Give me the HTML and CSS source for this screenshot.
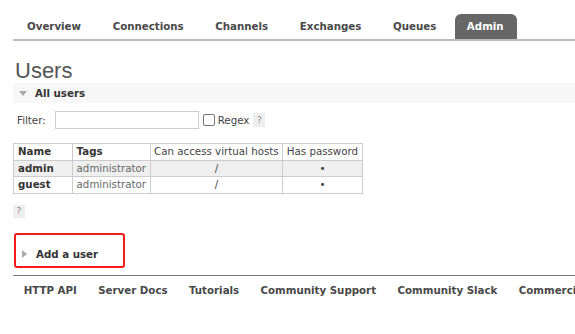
FILE: index.html
```html
<!DOCTYPE html>
<html lang="en">
<head>
    <meta charset="UTF-8">
    <meta name="viewport" content="width=device-width, initial-scale=1.0">
    <title>RabbitMQ Management - Users</title>
    <link rel="stylesheet" href="styles.css">
</head>
<body>

    <!-- Main Tabs -->
    <ul class="tabs">
        <li>Overview</li>
        <li>Connections</li>
        <li>Channels</li>
        <li>Exchanges</li>
        <li>Queues</li>
        <li class="selected">Admin</li>
    </ul>

    <h1>Users</h1>

    <!-- All users section -->
    <div class="section">
        <h2 class="section-head"><span class="arrow-down"></span>All users</h2>

        <div class="filter">
            <label>Filter:</label>
            <input type="text" class="filter-input">
            <input type="checkbox" class="check">
            <span>Regex</span>
            <span class="help">?</span>
        </div>

        <table class="list">
            <thead>
                <tr>
                    <th class="col-name bold">Name</th>
                    <th class="bold">Tags</th>
                    <th>Can access virtual hosts</th>
                    <th>Has password</th>
                </tr>
            </thead>
            <tbody>
                <tr class="alt">
                    <td class="bold">admin</td>
                    <td class="tags">administrator</td>
                    <td class="c">/</td>
                    <td class="c">&bull;</td>
                </tr>
                <tr>
                    <td class="bold">guest</td>
                    <td class="tags">administrator</td>
                    <td class="c">/</td>
                    <td class="c">&bull;</td>
                </tr>
            </tbody>
        </table>

        <span class="help help-table">?</span>
    </div>

    <!-- Add a user (collapsed) -->
    <div class="add-user">
        <h2 class="section-head plain"><span class="arrow-right"></span>Add a user</h2>
    </div>

    <!-- Footer -->
    <ul class="footer">
        <li>HTTP API</li>
        <li>Server Docs</li>
        <li>Tutorials</li>
        <li>Community Support</li>
        <li>Community Slack</li>
        <li>Commercial</li>
    </ul>

</body>
</html>
```

FILE: styles.css
```css
/* General Reset */
* {
    margin: 0;
    padding: 0;
    box-sizing: border-box;
}

body {
    font-family: "DejaVu Sans", Verdana, sans-serif;
    font-size: 10.25px;
    color: #444;
    background: #fff;
    padding-left: 13px;
    overflow: hidden;
    white-space: nowrap;
}

/* Tabs */
.tabs {
    list-style: none;
    display: flex;
    padding-top: 14px;
    border-bottom: 2px solid #bbb;
}

.tabs li {
    height: 25px;
    line-height: 25px;
    padding: 0 13px;
    margin-left: 1px;
    margin-right: 4.6px;
    font-weight: bold;
    color: #484848;
}

.tabs li.selected {
    background: #666;
    color: #fff;
    border-radius: 6px 6px 0 0;
    padding: 0 13px 0 12px;
}

/* Heading */
h1 {
    font-family: "Liberation Sans", Arial, sans-serif;
    font-weight: normal;
    font-size: 22px;
    line-height: 24px;
    color: #555;
    margin-top: 18px;
    margin-left: 2px;
}

.section-head {
    font-size: 10.25px;
    font-weight: bold;
    color: #333;
    height: 20px;
    line-height: 20px;
    background: #f7f7f7;
    display: flex;
    align-items: center;
}

.section-head.plain {
    background: none;
}

.arrow-down {
    width: 0;
    height: 0;
    border-left: 4px solid transparent;
    border-right: 4px solid transparent;
    border-top: 5px solid #aaa;
    margin: 1px 8px 0 6px;
}

.arrow-right {
    width: 0;
    height: 0;
    border-top: 4px solid transparent;
    border-bottom: 4px solid transparent;
    border-left: 5px solid #aaa;
    margin: 0 9px 0 6px;
}

/* Filter */
.filter {
    display: flex;
    align-items: center;
    height: 18px;
    margin-top: 8px;
}

.filter label {
    margin-left: 4px;
    margin-right: 9px;
}

.filter-input {
    width: 144px;
    height: 18px;
    border: 1px solid #ccc;
    outline: none;
    margin-right: 4px;
}

.check {
    appearance: none;
    width: 12px;
    height: 12px;
    border: 1px solid #777;
    border-radius: 2px;
    margin-right: 3px;
}

.help {
    display: inline-block;
    width: 12px;
    height: 14px;
    line-height: 14px;
    text-align: center;
    background: #eee;
    color: #888;
    font-size: 9px;
    margin-left: 4px;
}

/* Users table */
.list {
    border-collapse: collapse;
    margin-top: 14px;
}

.list th, .list td {
    border: 1px solid #ccc;
    padding: 0 3.6px;
    line-height: 15.7px;
    text-align: left;
    font-weight: normal;
    color: #444;
}

.list th.col-name {
    width: 59px;
    padding-left: 4px;
}

.list td.bold {
    padding-left: 4px;
}

.list .bold {
    font-weight: bold;
    color: #333;
}

.list .tags {
    color: #666;
}

.list .c {
    text-align: center;
}

.list tr.alt td {
    background: #efefef;
}

.help-table {
    display: block;
    margin: 11px 0 0 0;
    height: 13px;
    line-height: 13px;
}

/* Add a user (highlighted) */
.add-user {
    width: 111px;
    height: 35px;
    margin: 15px 0 0 1px;
    border: 2px solid #f41b1b;
    border-radius: 3px;
    padding-top: 9px;
}

.add-user .section-head {
    height: 20px;
}

/* Footer */
.footer {
    list-style: none;
    display: flex;
    margin-top: 7px;
    border-top: 1px solid #777;
    padding-top: 6px;
}

.footer li {
    line-height: 16px;
    padding: 0 10.7px;
    font-weight: bold;
    color: #484848;
}
```
